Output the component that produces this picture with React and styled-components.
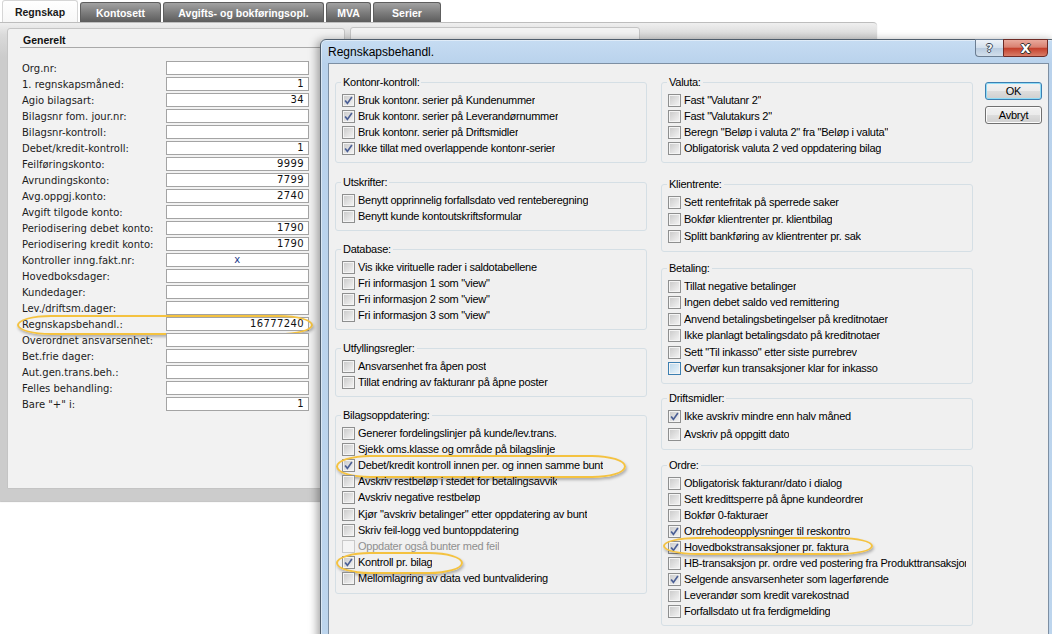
import React from 'react'
import styled, { createGlobalStyle, css } from 'styled-components'

const GlobalStyle = createGlobalStyle`
  html, body {
    margin: 0;
    padding: 0;
    width: 1052px;
    height: 634px;
    overflow: hidden;
    background: #fff;
  }
  #root { width: 1052px; height: 634px; }
`

const Desktop = styled.div`
  position: relative;
  width: 1052px;
  height: 634px;
  overflow: hidden;
  background: #fff;
  font-family: "DejaVu Sans", Verdana, sans-serif;
`

/* ---------- main window behind the dialog ---------- */

const TabStrip = styled.div`
  display: flex;
  align-items: flex-end;
  gap: 2px;
  height: 22px;
  padding-left: 2px;
`

const Tab = styled.div`
  box-sizing: border-box;
  width: ${p => p.$w}px;
  height: ${p => (p.$active ? 22 : 20)}px;
  display: flex;
  align-items: center;
  justify-content: center;
  font: bold 10.5px "Liberation Sans", Arial, sans-serif;
  border-radius: 3px 3px 0 0;
  ${p => p.$active ? css`
    background: linear-gradient(#ffffff, #f7f7f7);
    color: #1a1a1a;
    border: 1px solid #d6d6d6;
    border-bottom: none;
  ` : css`
    background: linear-gradient(#a2a2a2, #7a7a7a 55%, #5c5c5c);
    color: #fff;
    border: 1px solid #5e5e5e;
    border-bottom: none;
  `}
`

const MainWindow = styled.div`
  box-sizing: border-box;
  width: 877px;
  height: 479px;
  display: flex;
  align-items: flex-start;
  gap: 5px;
  padding: 5px 0 0 7px;
  border-top: 1px solid #bdbdbd;
  border-top-right-radius: 4px;
  background: linear-gradient(#efefef, #dadada 12px, #cccccc 34px);
  box-shadow: 0 1px 1px rgba(0, 0, 0, 0.25);
`

const Panel = styled.div`
  box-sizing: border-box;
  width: ${p => p.$w}px;
  height: ${p => p.$h}px;
  margin-top: ${p => p.$top || 0}px;
  background: #f2f2f2;
  border: 1px solid #c4c4c4;
  border-radius: 3px 3px 0 0;
`

const SectionTitle = styled.div`
  margin: 5px 0 0 12px;
  width: 315px;
  padding-left: 3px;
  font: bold 10.5px "Liberation Sans", Arial, sans-serif;
  line-height: 13px;
  color: #111;
  border-bottom: 1px solid #a9a9a9;
`

const FieldList = styled.div`
  margin-top: 12px;
`

const FieldRow = styled.div`
  position: relative;
  display: flex;
  align-items: center;
  height: 16px;
  padding-left: 14px;
`

const FieldLabel = styled.span`
  width: 144px;
  font-size: 10px;
  color: #1c1c1c;
  white-space: nowrap;
`

const FieldInput = styled.div`
  box-sizing: border-box;
  width: 143px;
  height: 14px;
  padding: 0 4px;
  background: #fff;
  border: 1px solid #a4a4a4;
  font-size: 10px;
  line-height: 12px;
  letter-spacing: 0.4px;
  color: ${p => (p.$center ? '#1d3c8c' : '#111')};
  text-align: ${p => (p.$center ? 'center' : 'right')};
`

/* hand-drawn yellow annotation ring */
const Ring = styled.span`
  position: absolute;
  left: ${p => p.$x}px;
  top: ${p => p.$y}px;
  width: ${p => p.$w}px;
  height: ${p => p.$h}px;
  box-sizing: border-box;
  border: 2px solid #f4c240;
  border-radius: 34px / 50%;
  box-shadow: 1px 2px 3px rgba(0, 0, 0, 0.28);
  pointer-events: none;
`

/* ---------- dialog ---------- */

const Dialog = styled.div`
  position: absolute;
  left: 320px;
  top: 39px;
  width: 737px;
  height: 620px;
  box-sizing: border-box;
  display: flex;
  flex-direction: column;
  padding: 0 7px;
  border: 1px solid #4f5d6c;
  border-radius: 6px 6px 0 0;
  background: linear-gradient(#c6dcf2, #b9d2ec 24px, #bdd5ed);
  box-shadow: -3px 1px 9px rgba(0, 0, 0, 0.35), inset 0 0 0 1px rgba(255, 255, 255, 0.45);
`

const TitleBar = styled.div`
  display: flex;
  align-items: center;
  height: 23px;
`

const TitleText = styled.div`
  flex: 1;
  padding-top: 1px;
  font: 12px "Liberation Sans", Arial, sans-serif;
  color: #000;
`

const CaptionGroup = styled.div`
  align-self: flex-start;
  display: flex;
  margin: -1px 1px 0 0;
`

const CaptionButton = styled.div`
  box-sizing: border-box;
  width: ${p => (p.$close ? 45 : 28)}px;
  height: 18px;
  display: flex;
  align-items: center;
  justify-content: center;
  font: bold 13px "DejaVu Sans", sans-serif;
  color: #fff;
  text-shadow: 1px 0 0 #333, -1px 0 0 #333, 0 1px 0 #333, 0 -1px 0 #333;
  ${p => p.$close ? css`
    background: linear-gradient(#e9a99c, #d98171 45%, #c4402c 52%, #d97d68);
    border: 1px solid #6e2b26;
    border-radius: 0 0 4px 0;
  ` : css`
    background: linear-gradient(#edf2f8, #d3dfec 48%, #b9cbdf 52%, #d2deeb);
    border: 1px solid #6b7d92;
    border-right: none;
    border-radius: 0 0 0 4px;
    color: #f4f6f8;
    text-shadow: 1px 0 0 #3a4656, -1px 0 0 #3a4656, 0 1px 0 #3a4656, 0 -1px 0 #3a4656;
    font-size: 11px;
  `}
`

const Client = styled.div`
  flex: 1;
  display: flex;
  align-items: flex-start;
  padding: 12px 0 0 6px;
  background: #f0f0f0;
  border: 1px solid #7d8fa3;
  border-bottom: none;
  font: 11px "Liberation Sans", Arial, sans-serif;
  letter-spacing: -0.25px;
  color: #000;
`

const Column = styled.div`
  width: 312px;
  display: flex;
  flex-direction: column;
  margin-right: 14px;
`

const Group = styled.fieldset`
  margin: ${p => p.$gap || 0}px 0 0 0;
  padding: 3px 6px 6px 6px;
  min-width: 0;
  border: 1px solid #d5dfe5;
  border-radius: 3px;
`

const Legend = styled.legend`
  padding: 0 2px;
  margin-left: -1px;
  line-height: 13px;
`

const Item = styled.div`
  position: relative;
  display: flex;
  align-items: center;
  gap: 3px;
  height: ${p => p.$row}px;
  color: ${p => (p.$disabled ? '#8f8f8f' : '#000')};
`

const ItemText = styled.span`
  min-width: 0;
  overflow: hidden;
  white-space: nowrap;
  line-height: 13px;
`

const Box = styled.span`
  flex: none;
  width: 13px;
  height: 13px;
  box-sizing: border-box;
  display: flex;
  align-items: center;
  justify-content: center;
  border: 1px solid ${p => (p.$disabled ? '#c9c9c9' : p.$hot ? '#3c7fb1' : '#8e8f8f')};
  background: ${p =>
    p.$disabled ? '#f4f4f4'
      : p.$hot ? 'linear-gradient(135deg, #b9d6ea, #eef6fb)'
        : 'linear-gradient(135deg, #c8c8c8, #f6f6f6)'};
  box-shadow: inset 0 0 0 1px #f4f4f4;
`

const ButtonColumn = styled.div`
  display: flex;
  flex-direction: column;
  gap: 6px;
  margin: 6px 0 0 -2px;
`

const Button = styled.div`
  box-sizing: border-box;
  width: 57px;
  height: 18px;
  display: flex;
  align-items: center;
  justify-content: center;
  font: 11px "Liberation Sans", Arial, sans-serif;
  color: #000;
  border: 1px solid ${p => (p.$default ? '#3c7fb1' : '#707070')};
  border-radius: 3px;
  background: linear-gradient(#f2f2f2, #ebebeb 50%, #dddddd 51%, #cfcfcf);
  box-shadow: inset 0 0 0 1px ${p => (p.$default ? '#8fdcf7' : '#fbfbfb')};
`

/* ---------- data ---------- */

const fields = [
  ['Org.nr:', ''],
  ['1. regnskapsmåned:', '1'],
  ['Agio bilagsart:', '34'],
  ['Bilagsnr fom. jour.nr:', ''],
  ['Bilagsnr-kontroll:', ''],
  ['Debet/kredit-kontroll:', '1'],
  ['Feilføringskonto:', '9999'],
  ['Avrundingskonto:', '7799'],
  ['Avg.oppgj.konto:', '2740'],
  ['Avgift tilgode konto:', ''],
  ['Periodisering debet konto:', '1790'],
  ['Periodisering kredit konto:', '1790'],
  ['Kontroller inng.fakt.nr:', 'x', 'center'],
  ['Hovedboksdager:', ''],
  ['Kundedager:', ''],
  ['Lev./driftsm.dager:', ''],
  ['Regnskapsbehandl.:', '16777240', 'ring'],
  ['Overordnet ansvarsenhet:', ''],
  ['Bet.frie dager:', ''],
  ['Aut.gen.trans.beh.:', ''],
  ['Felles behandling:', ''],
  ['Bare "+" i:', '1'],
]

const leftGroups = [
  {
    title: 'Kontonr-kontroll:', gap: 0, row: 16,
    items: [
      { t: 'Bruk kontonr. serier på Kundenummer', c: true },
      { t: 'Bruk kontonr. serier på Leverandørnummer', c: true },
      { t: 'Bruk kontonr. serier på Driftsmidler' },
      { t: 'Ikke tillat med overlappende kontonr-serier', c: true },
    ],
  },
  {
    title: 'Utskrifter:', gap: 13, row: 16,
    items: [
      { t: 'Benytt opprinnelig forfallsdato ved renteberegning' },
      { t: 'Benytt kunde kontoutskriftsformular' },
    ],
  },
  {
    title: 'Database:', gap: 12, row: 16,
    items: [
      { t: 'Vis ikke virituelle rader i saldotabellene' },
      { t: 'Fri informasjon 1 som "view"' },
      { t: 'Fri informasjon 2 som "view"' },
      { t: 'Fri informasjon 3 som "view"' },
    ],
  },
  {
    title: 'Utfyllingsregler:', gap: 12, row: 16,
    items: [
      { t: 'Ansvarsenhet fra åpen post' },
      { t: 'Tillat endring av fakturanr på åpne poster' },
    ],
  },
  {
    title: 'Bilagsoppdatering:', gap: 12, row: 16.2,
    items: [
      { t: 'Generer fordelingslinjer på kunde/lev.trans.' },
      { t: 'Sjekk oms.klasse og område på bilagslinje' },
      { t: 'Debet/kredit kontroll innen per. og innen samme bunt', c: true, ring: [-6, -2, 290, 23] },
      { t: 'Avskriv restbeløp i stedet for betalingsavvik' },
      { t: 'Avskriv negative restbeløp' },
      { t: 'Kjør "avskriv betalinger" etter oppdatering av bunt' },
      { t: 'Skriv feil-logg ved buntoppdatering' },
      { t: 'Oppdater også bunter med feil', disabled: true },
      { t: 'Kontroll pr. bilag', c: true, ring: [-6, -3, 127, 22] },
      { t: 'Mellomlagring av data ved buntvalidering' },
    ],
  },
]

const rightGroups = [
  {
    title: 'Valuta:', gap: 0, row: 16,
    items: [
      { t: 'Fast "Valutanr 2"' },
      { t: 'Fast "Valutakurs 2"' },
      { t: 'Beregn "Beløp i valuta 2" fra "Beløp i valuta"' },
      { t: 'Obligatorisk valuta 2 ved oppdatering bilag' },
    ],
  },
  {
    title: 'Klientrente:', gap: 15, row: 17,
    items: [
      { t: 'Sett rentefritak på sperrede saker' },
      { t: 'Bokfør klientrenter pr. klientbilag' },
      { t: 'Splitt bankføring av klientrenter pr. sak' },
    ],
  },
  {
    title: 'Betaling:', gap: 10, row: 16.5,
    items: [
      { t: 'Tillat negative betalinger' },
      { t: 'Ingen debet saldo ved remittering' },
      { t: 'Anvend betalingsbetingelser på kreditnotaer' },
      { t: 'Ikke planlagt betalingsdato på kreditnotaer' },
      { t: 'Sett "Til inkasso" etter siste purrebrev' },
      { t: 'Overfør kun transaksjoner klar for inkasso', hot: true },
    ],
  },
  {
    title: 'Driftsmidler:', gap: 8, row: 17.5,
    items: [
      { t: 'Ikke avskriv mindre enn halv måned', c: true },
      { t: 'Avskriv på oppgitt dato' },
    ],
  },
  {
    title: 'Ordre:', gap: 9, row: 16,
    items: [
      { t: 'Obligatorisk fakturanr/dato i dialog' },
      { t: 'Sett kredittsperre på åpne kundeordrer' },
      { t: 'Bokfør 0-fakturaer' },
      { t: 'Ordrehodeopplysninger til reskontro', c: true },
      { t: 'Hovedbokstransaksjoner pr. faktura', c: true, ring: [-5, -2, 210, 18] },
      { t: 'HB-transaksjon pr. ordre ved postering fra Produkttransaksjoner' },
      { t: 'Selgende ansvarsenheter som lagerførende', c: true },
      { t: 'Leverandør som kredit varekostnad' },
      { t: 'Forfallsdato ut fra ferdigmelding' },
    ],
  },
]

/* ---------- pieces ---------- */

const CheckMark = () => (
  <svg width="9" height="9" viewBox="0 0 9 9">
    <path d="M1.1 4.5 L3.4 7.4 L7.9 1.1" fill="none" stroke="#4b5f95" strokeWidth="1.7" />
  </svg>
)

const CheckItem = ({ item, row }) => (
  <Item $row={row} $disabled={item.disabled}>
    <Box $disabled={item.disabled} $hot={item.hot}>
      {item.c && <CheckMark />}
    </Box>
    <ItemText>{item.t}</ItemText>
    {item.ring && <Ring $x={item.ring[0]} $y={item.ring[1]} $w={item.ring[2]} $h={item.ring[3]} />}
  </Item>
)

const GroupBox = ({ group }) => (
  <Group $gap={group.gap}>
    <Legend>{group.title}</Legend>
    {group.items.map((item, i) => (
      <CheckItem key={i} item={item} row={group.row} />
    ))}
  </Group>
)

const tabs = [
  { name: 'Regnskap', w: 76, active: true },
  { name: 'Kontosett', w: 81 },
  { name: 'Avgifts- og bokføringsopl.', w: 161 },
  { name: 'MVA', w: 45 },
  { name: 'Serier', w: 68 },
]

export default function App() {
  return (
    <Desktop>
      <GlobalStyle />

      <TabStrip>
        {tabs.map(t => (
          <Tab key={t.name} $w={t.w} $active={t.active}>{t.name}</Tab>
        ))}
      </TabStrip>

      <MainWindow>
        <Panel $w={338} $h={461}>
          <SectionTitle>Generelt</SectionTitle>
          <FieldList>
            {fields.map(([label, value, mode]) => (
              <FieldRow key={label}>
                <FieldLabel>{label}</FieldLabel>
                <FieldInput $center={mode === 'center'}>{value}</FieldInput>
                {mode === 'ring' && <Ring $x={9} $y={-1} $w={296} $h={20} />}
              </FieldRow>
            ))}
          </FieldList>
        </Panel>
        <Panel $w={290} $h={462} $top={-1} />
      </MainWindow>

      <Dialog>
        <TitleBar>
          <TitleText>Regnskapsbehandl.</TitleText>
          <CaptionGroup>
            <CaptionButton>?</CaptionButton>
            <CaptionButton $close>X</CaptionButton>
          </CaptionGroup>
        </TitleBar>

        <Client>
          <Column>
            {leftGroups.map(g => <GroupBox key={g.title} group={g} />)}
          </Column>
          <Column>
            {rightGroups.map(g => <GroupBox key={g.title} group={g} />)}
          </Column>
          <ButtonColumn>
            <Button $default>OK</Button>
            <Button>Avbryt</Button>
          </ButtonColumn>
        </Client>
      </Dialog>
    </Desktop>
  )
}
